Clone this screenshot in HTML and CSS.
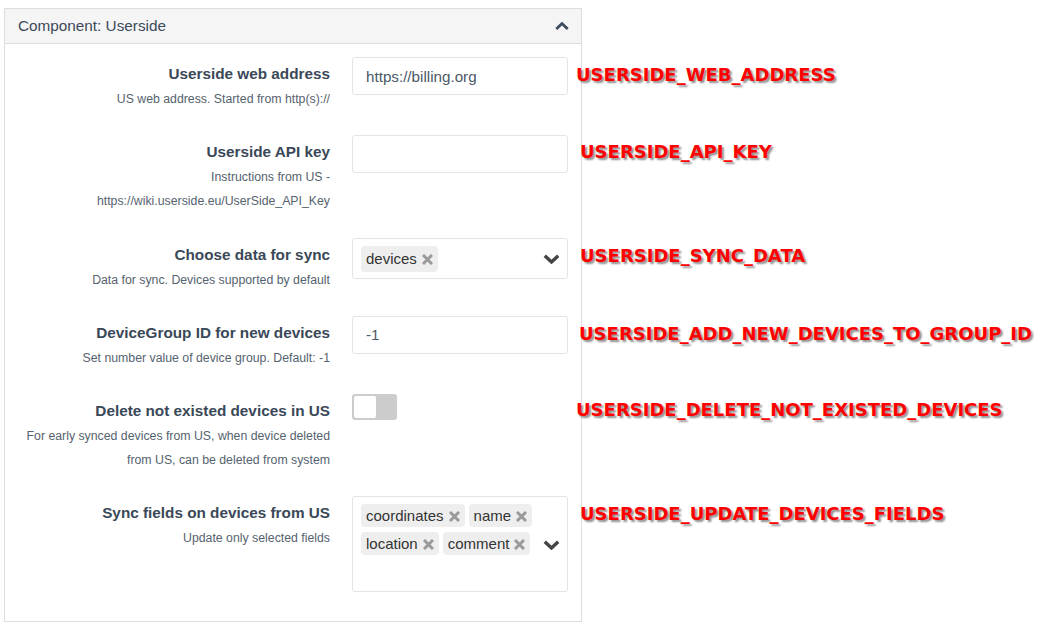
FILE: index.html
```html
<!DOCTYPE html>
<html>
<head>
<meta charset="utf-8">
<link rel="stylesheet" href="styles.css">
</head>
<body>
<div class="panel">
  <div class="panel-head">
    <span class="panel-title">Component: Userside</span>
    <svg class="chev-up" width="14" height="8" viewBox="0 0 14 8"><path d="M1.3 7 L7 1.6 L12.7 7" fill="none" stroke="currentColor" stroke-width="2.8"/></svg>
  </div>
  <div class="panel-body">
    <div class="row">
      <div class="label-col">
        <div class="label">Userside web address</div>
        <div class="desc">US web address. Started from http(s)://</div>
      </div>
      <div class="control"><div class="input">https://billing.org</div></div>
      <div class="note note-a">USERSIDE_WEB_ADDRESS</div>
    </div>

    <div class="row">
      <div class="label-col">
        <div class="label">Userside API key</div>
        <div class="desc">Instructions from US -<br>https://wiki.userside.eu/UserSide_API_Key</div>
      </div>
      <div class="control"><div class="input"></div></div>
      <div class="note note-b note-mid">USERSIDE_API_KEY</div>
    </div>

    <div class="row">
      <div class="label-col">
        <div class="label">Choose data for sync</div>
        <div class="desc">Data for sync. Devices supported by default</div>
      </div>
      <div class="control">
        <div class="select">
          <div class="tags">
            <span class="tag">devices<svg class="x" width="11" height="11" viewBox="0 0 11 11"><path d="M1 1 L10 10 M10 1 L1 10" stroke="currentColor" stroke-width="3"/></svg></span>
          </div>
          <svg class="chev-down" width="17" height="10" viewBox="0 0 17 10"><path d="M1.8 1.8 L8.5 8 L15.2 1.8" fill="none" stroke="currentColor" stroke-width="3.4"/></svg>
        </div>
      </div>
      <div class="note note-b">USERSIDE_SYNC_DATA</div>
    </div>

    <div class="row">
      <div class="label-col">
        <div class="label">DeviceGroup ID for new devices</div>
        <div class="desc">Set number value of device group. Default: -1</div>
      </div>
      <div class="control"><div class="input">-1</div></div>
      <div class="note note-c">USERSIDE_ADD_NEW_DEVICES_TO_GROUP_ID</div>
    </div>

    <div class="row">
      <div class="label-col">
        <div class="label">Delete not existed devices in US</div>
        <div class="desc">For early synced devices from US, when device deleted<br>from US, can be deleted from system</div>
      </div>
      <div class="control"><div class="toggle"><div class="knob"></div></div></div>
      <div class="note note-a note-up">USERSIDE_DELETE_NOT_EXISTED_DEVICES</div>
    </div>

    <div class="row">
      <div class="label-col">
        <div class="label">Sync fields on devices from US</div>
        <div class="desc">Update only selected fields</div>
      </div>
      <div class="control">
        <div class="select select-multi">
          <div class="tags">
            <span class="tag tag-sm">coordinates<svg class="x" width="11" height="11" viewBox="0 0 11 11"><path d="M1 1 L10 10 M10 1 L1 10" stroke="currentColor" stroke-width="3"/></svg></span>
            <span class="tag tag-sm">name<svg class="x" width="11" height="11" viewBox="0 0 11 11"><path d="M1 1 L10 10 M10 1 L1 10" stroke="currentColor" stroke-width="3"/></svg></span>
            <span class="tag tag-sm">location<svg class="x" width="11" height="11" viewBox="0 0 11 11"><path d="M1 1 L10 10 M10 1 L1 10" stroke="currentColor" stroke-width="3"/></svg></span>
            <span class="tag tag-sm">comment<svg class="x" width="11" height="11" viewBox="0 0 11 11"><path d="M1 1 L10 10 M10 1 L1 10" stroke="currentColor" stroke-width="3"/></svg></span>
          </div>
          <svg class="chev-down" width="17" height="10" viewBox="0 0 17 10"><path d="M1.8 1.8 L8.5 8 L15.2 1.8" fill="none" stroke="currentColor" stroke-width="3.4"/></svg>
        </div>
      </div>
      <div class="note note-b">USERSIDE_UPDATE_DEVICES_FIELDS</div>
    </div>
  </div>
</div>
</body>
</html>
```

FILE: styles.css
```css
html, body {
  margin: 0;
  background: #ffffff;
}

body {
  font-family: "Liberation Sans", Arial, sans-serif;
  color: #3a4858;
}

.panel {
  margin: 8px 0 0 4px;
  width: 578px;
  box-sizing: border-box;
  border: 1px solid #dddddd;
  background: #ffffff;
}

.panel-head {
  height: 34px;
  box-sizing: content-box;
  background: #f5f5f5;
  border-bottom: 1px solid #dddddd;
  display: flex;
  align-items: center;
  justify-content: space-between;
  padding: 0 12px 0 13px;
}

.panel-title {
  font-size: 15.3px;
  color: #3c4a5a;
}

.chev-up {
  display: block;
  color: #3c4a5a;
  margin-top: -1px;
}

.panel-body {
  padding: 13px 0 29px 0;
  display: flex;
  flex-direction: column;
  gap: 24.3px;
}

.row {
  display: grid;
  grid-template-columns: 347px 216px max-content;
  align-items: start;
}

.label-col {
  padding: 6px 22px 0 0;
  text-align: right;
}

.label {
  font-size: 15.3px;
  font-weight: 700;
  line-height: 22px;
  color: #3a4858;
}

.desc {
  margin-top: 2px;
  font-size: 12.3px;
  line-height: 24px;
  color: #56636f;
}

.input {
  height: 38px;
  box-sizing: border-box;
  border: 1px solid #e4e4e4;
  border-radius: 3px;
  padding: 0 13px;
  display: flex;
  align-items: center;
  font-size: 15.2px;
  color: #4b5866;
}

.select {
  height: 41px;
  box-sizing: border-box;
  border: 1px solid #e4e4e4;
  border-radius: 3px;
  padding: 7px 7px 0 8px;
  display: flex;
  align-items: flex-start;
}

.select-multi {
  height: 96px;
}

.tags {
  flex: 1;
  display: flex;
  flex-wrap: wrap;
  gap: 5px 4px;
}

.tag {
  display: inline-flex;
  align-items: center;
  gap: 5px;
  height: 26px;
  padding: 0 5px;
  background: #eeeeee;
  border-radius: 4px;
  font-size: 15px;
  color: #333333;
}

.tag-sm {
  height: 23px;
}

.x {
  display: block;
  color: #9a9a9a;
  margin-top: 1px;
}

.chev-down {
  display: block;
  align-self: center;
  color: #444444;
  margin-top: -5px;
}

.select-multi .chev-down {
  margin-top: -6px;
}

.toggle {
  width: 45px;
  height: 26px;
  box-sizing: border-box;
  background: #cccccc;
  border-radius: 3px;
  padding: 2px;
}

.knob {
  width: 22px;
  height: 22px;
  background: #ffffff;
  border-radius: 2px;
}

.note {
  font-family: "DejaVu Sans", sans-serif;
  font-weight: 700;
  font-size: 18px;
  line-height: 22px;
  margin-top: 7px;
  color: #ff0000;
  white-space: nowrap;
  text-shadow: 2px 2px 2px rgba(0, 0, 0, 0.45);
}

.note-a {
  margin-left: 8px;
}

.note-b {
  margin-left: 12px;
}

.note-c {
  margin-left: 11px;
}

.note-mid {
  margin-top: 6px;
}

.note-up {
  margin-top: 5px;
}
```
